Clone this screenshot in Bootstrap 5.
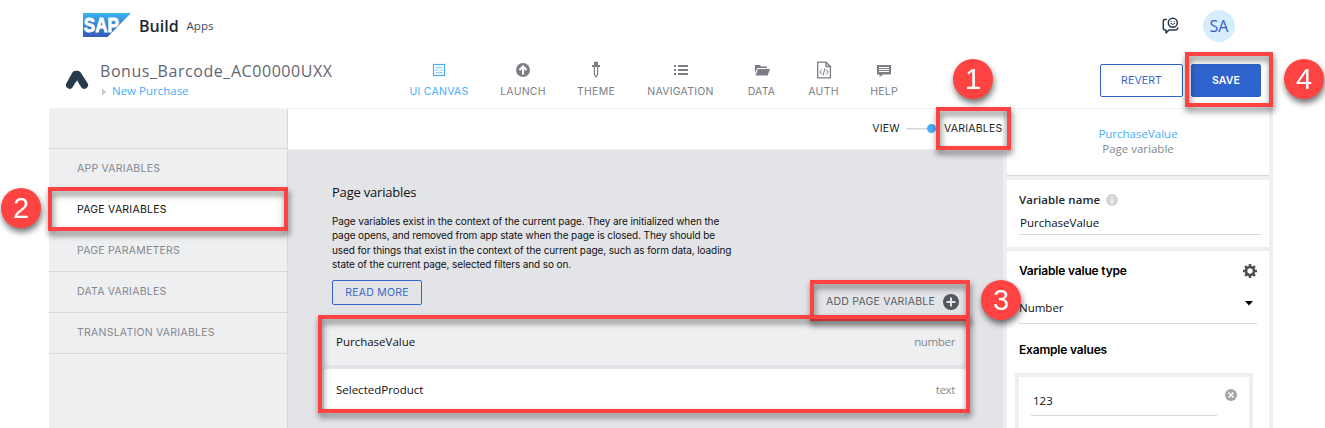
<!DOCTYPE html>
<html lang="en">
<head>
<meta charset="utf-8">
<title>SAP Build Apps</title>
<link href="https://cdn.jsdelivr.net/npm/bootstrap@5.3.0/dist/css/bootstrap.min.css" rel="stylesheet">
<style>
  body { font: 400 11.5px/1.25 "Open Sans", sans-serif; color: #111; height: 428px; overflow: hidden; }
  svg { display: block; flex: none; }
  .app { width: 1224px; margin-left: 49px; height: 428px; }
  .caps { font: 400 10.5px/14px Inter, sans-serif; letter-spacing: .24px; white-space: nowrap; }

  .brand-row { height: 52px; padding-left: 34px; }
  .brand-name { font-weight: 600; font-size: 16px; line-height: 20px; color: #1c2733; letter-spacing: 0; margin: -1px 0 0 8px; }
  .brand-sub { color: #354a5f; margin-left: 8px; }
  .avatar { width: 32px; height: 32px; background: #d5edfd; color: #3660cb; font-size: 16px; margin-left: 24px; margin-right: 38px; }

  .tool-row { height: 57px; border-bottom: 1px solid #f1f2f3; }
  .logo-mark { margin: 17px 11px 0 16px; }
  .titles { width: 309.5px; padding-top: 9px; }
  .app-title { font-size: 16px; line-height: 20px; letter-spacing: .56px; color: #5f6673; }
  .crumb { color: #47aefa; line-height: 15px; padding-top: 2px; }
  .crumb svg { margin: 2px 6px 0 2px; }
  .tools { display: grid; grid-template-columns: 59px 45px 37px 68px 30px 30px 27px; gap: 32px; padding-top: 9px; color: #7b7e85; }
  .tools > div { display: flex; flex-direction: column; align-items: center; }
  .tools svg { width: 18px; height: 18px; margin-bottom: 6px; }
  .tools .on { color: #47aefa; }
  .btn.act { height: 33px; padding: 0; border-radius: 2px; border: 1px solid #2f63cb; font: 400 10.5px/31px Inter, sans-serif; letter-spacing: .1px; color: #3565cc; }
  .btn.act.solid { background: #2f63cd; color: #fff; font-weight: 600; }

  .work { height: 319px; }
  .side { width: 239px; background: #eeeff1; color: #85888e; border-right: 1px solid #d6d8da; }
  .side > div { height: 41px; padding: 13px 0 0 28px; border-bottom: 1px solid #d6d8da; }
  .side .blank { height: 40px; }
  .side .sel { background: #fff; color: #111; }
  .canvas { width: 715px; background: #e3e4e8; }
  .switch { height: 41px; background: #fff; border-bottom: 1px solid #edeef0; padding: 0 .5px 0 0; color: #1a1d22; }
  .rail { width: 30px; height: 9px; margin: -1px 8px 0 6px; background: linear-gradient(#d3d5d9, #d3d5d9) 0 4px/30px 1.5px no-repeat; }
  .rail::after { content: ""; display: block; width: 9px; height: 9px; border-radius: 50%; background: #46aefa; margin-left: 21px; }
  .intro { padding: 33px 0 0 44px; }
  .intro h1 { font-size: 13px; line-height: 18px; letter-spacing: -.2px; margin: 0 0 13px; }
  .intro p { font: 400 10px/14.4px Inter, sans-serif; letter-spacing: -.105px; margin: 0 0 8px; white-space: nowrap; }
  .more { width: 90px; height: 25px; line-height: 23px; border: 1px solid #3467cd; border-radius: 2px; color: #3a68cc; text-align: center; }
  .add { height: 23px; margin: -15px 44px 0 0; padding-top: 1px; color: #5a5d64; }
  .item { height: 42px; width: 642px; margin-left: 36px; padding: 2px 11px 0 12px; border-radius: 3px; background: #fff; }
  .item.cur { height: 48px; margin: 4px 0 4px 36px; padding-top: 3px; background: #eeeff1; }
  .item .muted { letter-spacing: -.35px; }
  .muted { color: #85888e; }

  .props { width: 270px; background: #eeeff1; padding: 0 4px; }
  .props section { background: #fff; }
  .head-box { height: 67px; border-bottom: 1px solid #d6d8da; padding-top: 17px; line-height: 15px; text-align: center; }
  .name-box { height: 67px; margin-top: 4px; padding: 12px 8px 0 12px; }
  .field { border-bottom: 1px solid #d6d8da; }
  .strong { font-weight: 600; line-height: 15px; letter-spacing: .07px; color: #20262d; }
  .strong2 { font: 600 12px/15px Inter, sans-serif; letter-spacing: -.18px; color: #000; }
  .type-box { height: 180px; margin-top: 4px; padding: 12px 12px 0; }
  .example { width: 238px; height: 60px; margin: 16px 0 0 -4px; border: 4px solid #eeeff1; padding: 11px 12px; }

  /* numbered callouts lying over the page */
  .frame, .pin { position: absolute; filter: drop-shadow(1px 4px 3px rgba(0,0,0,.55)); }
  .frame { border: 4px solid #ff4343; }
  .pin { width: 40px; height: 40px; border-radius: 50%; background: #ff4343; color: #fff; font: 29px/40px "Liberation Sans", sans-serif; text-align: center; }
</style>
</head>
<body class="bg-white position-relative">
<div class="app">
  <header class="brand-row d-flex align-items-center">
    <svg width="48" height="24" viewBox="0 0 48 24" style="margin-top:-2px"><defs><linearGradient id="g" x2="0" y2="1"><stop stop-color="#38b4ec"/><stop offset=".5" stop-color="#3b82d8"/><stop offset="1" stop-color="#345bb9"/></linearGradient></defs><path fill="url(#g)" d="M0 0h48L24.500 24H0z"/><text x=".8" y="19.300" font-family="Liberation Sans, sans-serif" font-weight="700" font-size="20" textLength="35" lengthAdjust="spacingAndGlyphs" fill="#fff" stroke="#fff" stroke-width=".8">SAP</text></svg>
    <span class="brand-name">Build</span><span class="brand-sub">Apps</span>
    <svg class="ms-auto" width="18" height="18" viewBox="0 0 18 18" fill="none" stroke="#25384b" stroke-width="1.5" stroke-linecap="round" stroke-linejoin="round" style="margin-right:-1px"><path d="M4.300 2.500H3Q1.300 2.500 1.300 4.500v6.500q0 2 2 2H4v3l3-3h6q2.500 0 2.800-2"/><circle cx="10.800" cy="5.700" r="4.500"/><path stroke-width="1" d="M9.300 4.500v.2M12.300 4.500v.2M8.800 6.500q2 2.200 4 0"/></svg>
    <span class="avatar rounded-circle d-flex align-items-center justify-content-center">SA</span>
  </header>

  <div class="tool-row d-flex align-items-start">
    <svg class="logo-mark" width="24" height="21" viewBox="0 0 24 21"><path fill="none" stroke="#263a4e" stroke-width="7.500" stroke-linecap="round" stroke-linejoin="round" d="M4.700 16 10.500 5.500h2L19.300 16"/><path fill="#263a4e" d="M8 8h7l2 5h-5l-3 1z"/><path fill="#fff" d="M8.800 17.500 12.200 11l1.700 4.500 1 2V21H8z"/></svg>
    <div class="titles">
      <div class="app-title">Bonus_Barcode_AC00000UXX</div>
      <div class="crumb d-flex align-items-center"><svg width="4" height="8"><path fill="#c9ccd0" d="M0 0l4 4-4 4z"/></svg>New Purchase</div>
    </div>
    <nav class="tools caps">
      <div class="on"><svg viewBox="0 0 18 18"><rect x="3.500" y="3.500" width="11" height="11" fill="none" stroke="currentColor" stroke-width="1.200"/><path fill="currentColor" d="M6 6h1.500v1H6zM8.500 5.500h1v2h-1zM10.500 6H12v1h-1.500zM5.500 8.500h2v1h-2zM10.500 8.500h2v1h-2zM8.500 10.500h1v2h-1zM6 11h1.500v1H6zM10.500 11H12v1h-1.500z"/></svg>UI CANVAS</div>
      <div><svg viewBox="0 0 18 18"><circle cx="9" cy="9" r="7" fill="currentColor"/><path d="M9 13.500V5.500M5.500 9 9 5.500 12.500 9" fill="none" stroke="#fff" stroke-width="2"/></svg>LAUNCH</div>
      <div><svg viewBox="0 0 18 18"><path fill="currentColor" d="M7 1q2-1 4 0v3h2v2H5V4h2z"/><path fill="none" stroke="currentColor" stroke-width="1.200" d="M7.400 6v7.500L9 16l1.600-2.500V6"/></svg>THEME</div>
      <div><svg viewBox="0 0 18 18"><path fill="currentColor" d="M2 4h2v2H2zM6 4h10v2H6zM2 8h2v2H2zM6 8h10v2H6zM2 12h2v2H2zM6 12h10v2H6z"/></svg>NAVIGATION</div>
      <div><svg viewBox="0 0 18 18"><path fill="currentColor" d="M2 4h5l1 1.500h6V7H4.500L2 12zM5 8h12l-2.300 6.500H2.500z"/></svg>DATA</div>
      <div><svg viewBox="0 0 18 18" fill="none" stroke="currentColor"><path stroke-width="1.300" d="M2.700 1.200h8.300l4.400 4.300v11.300H2.700zM11 1.200v4.300h4.400"/><path d="M6.800 8.500 4.800 11l2 2.500M11.200 8.500l2 2.500-2 2.500M9.800 7.500l-1.600 7"/></svg>AUTH</div>
      <div><svg viewBox="0 0 18 18"><path fill="currentColor" d="M2 4h14v9.500H8L4.500 16v-2.500H2z"/><path stroke="#fff" d="M4 6.500h10M4 8.500h10M4 10.500h10"/></svg>HELP</div>
    </nav>
    <div class="d-flex gap-2 ms-auto" style="padding:12px 12px 0 0">
      <button class="btn act" style="width:83px">REVERT</button>
      <button class="btn act solid" style="width:70px">SAVE</button>
    </div>
  </div>

  <div class="work d-flex">
    <aside class="side caps">
      <div class="blank"></div>
      <div>APP VARIABLES</div>
      <div class="sel">PAGE VARIABLES</div>
      <div>PAGE PARAMETERS</div>
      <div>DATA VARIABLES</div>
      <div>TRANSLATION VARIABLES</div>
    </aside>
    <main class="canvas">
      <div class="switch caps d-flex align-items-center justify-content-end">VIEW<span class="rail"></span>VARIABLES</div>
      <div class="intro">
        <h1>Page variables</h1>
        <p>Page variables exist in the context of the current page. They are initialized when the<br>page opens, and removed from app state when the page is closed. They should be<br>used for things that exist in the context of the current page, such as form data, loading<br>state of the current page, selected filters and so on.</p>
        <div class="more caps" style="line-height:23px">READ MORE</div>
      </div>
      <div class="add caps d-flex align-items-center justify-content-end">ADD PAGE VARIABLE<svg style="margin-left:8px" width="16" height="16"><circle cx="8" cy="8" r="8" fill="#54575e"/><path stroke="#e3e4e8" stroke-width="2" d="M8 3.500v9M3.500 8h9"/></svg></div>
      <div class="item cur d-flex align-items-center justify-content-between"><span>PurchaseValue</span><span class="muted">number</span></div>
      <div class="item d-flex align-items-center justify-content-between"><span>SelectedProduct</span><span class="muted">text</span></div>
    </main>
    <aside class="props">
      <section class="head-box"><div style="color:#47aefa">PurchaseValue</div><div class="muted">Page variable</div></section>
      <section class="name-box">
        <div class="strong d-flex align-items-center">Variable name<svg style="margin-left:6px" width="12" height="12"><circle cx="6" cy="6" r="6" fill="#d3d5d8"/><path stroke="#fff" stroke-width="1.500" d="M6 2.500v1.500M6 5v4.500"/></svg></div>
        <div class="field" style="height:28px;padding:9px 0 0 1px;">PurchaseValue</div>
      </section>
      <section class="type-box">
        <div class="strong2 d-flex align-items-center justify-content-between">Variable value type<svg width="14" height="14" viewBox="-7 -7 14 14"><circle r="4" fill="none" stroke="#4d5055" stroke-width="2.600"/><path stroke="#4d5055" stroke-width="2.600" d="M0-7v3M0 7V4M-7 0h3M7 0H4M-4.900-4.900l2 2M4.900 4.900l-2-2M4.900-4.900l-2 2M-4.900 4.900l2-2"/></svg></div>
        <div class="field d-flex justify-content-between" style="height:46px;padding-top:23px;">Number<svg style="margin:0 4px 0 0" width="8" height="5"><path d="M0 0h8L4 4.500z"/></svg></div>
        <div class="strong2" style="margin-top:18px">Example values</div>
        <div class="example d-flex justify-content-between"><div class="field" style="width:186px;height:28px;padding:6px 0 0 2px;">123</div><svg class="me-0" width="12" height="12" style="margin-top:1px"><circle cx="6" cy="6" r="6" fill="#a3a5a9"/><path stroke="#fff" stroke-width="1.500" d="M3.500 3.500l5 5M8.500 3.500l-5 5"/></svg></div>
      </section>
    </aside>
  </div>
</div>

<div class="frame" style="left:936px;top:107px;width:75px;height:43px"></div>
<div class="frame" style="left:48px;top:187px;width:240px;height:44px"></div>
<div class="frame" style="left:810px;top:280px;width:160px;height:41px"></div>
<div class="frame" style="left:318px;top:315px;width:652px;height:98px"></div>
<div class="frame" style="left:1185px;top:52px;width:88px;height:55px"></div>
<div class="pin" style="left:953px;top:59px">1</div>
<div class="pin" style="left:1px;top:188px">2</div>
<div class="pin" style="left:981px;top:280px">3</div>
<div class="pin" style="left:1284px;top:59px">4</div>
<script src="https://cdn.jsdelivr.net/npm/bootstrap@5.3.0/dist/js/bootstrap.bundle.min.js"></script>
</body>
</html>
